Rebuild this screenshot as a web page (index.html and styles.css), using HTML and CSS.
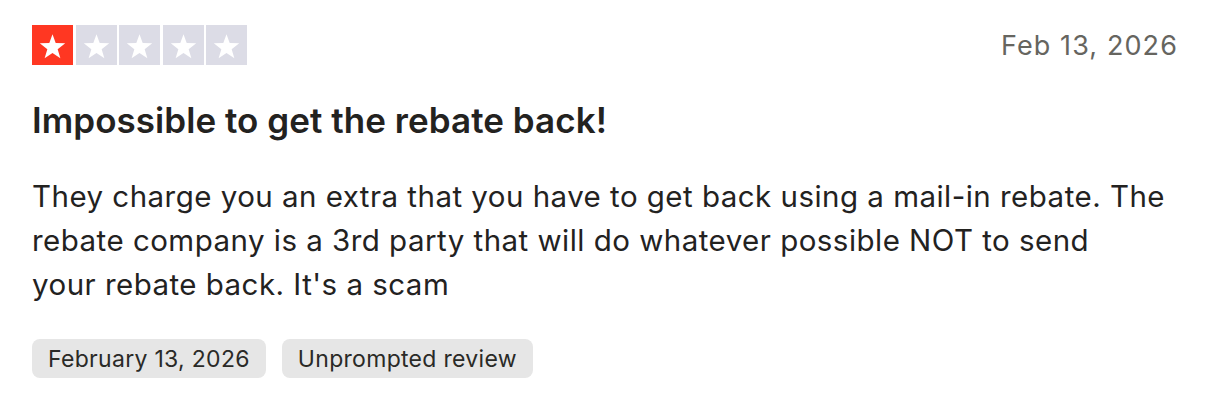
FILE: index.html
```html
<!DOCTYPE html>
<html lang="en">
<head>
<meta charset="utf-8">
<title>Review</title>
<link rel="stylesheet" href="styles.css">
</head>
<body>
<article class="review">
  <header class="review-head">
    <div class="stars" aria-label="Rated 1 out of 5 stars">
      <span class="star star-on"><svg viewBox="0 0 24 24"><path d="M12 3.2l2.47 6.93 7.37.2-5.84 4.5 2.1 7.07L12 17.74l-6.1 4.16 2.1-7.07-5.84-4.5 7.37-.2z"/></svg></span>
      <span class="star"><svg viewBox="0 0 24 24"><path d="M12 3.2l2.47 6.93 7.37.2-5.84 4.5 2.1 7.07L12 17.74l-6.1 4.16 2.1-7.07-5.84-4.5 7.37-.2z"/></svg></span>
      <span class="star"><svg viewBox="0 0 24 24"><path d="M12 3.2l2.47 6.93 7.37.2-5.84 4.5 2.1 7.07L12 17.74l-6.1 4.16 2.1-7.07-5.84-4.5 7.37-.2z"/></svg></span>
      <span class="star"><svg viewBox="0 0 24 24"><path d="M12 3.2l2.47 6.93 7.37.2-5.84 4.5 2.1 7.07L12 17.74l-6.1 4.16 2.1-7.07-5.84-4.5 7.37-.2z"/></svg></span>
      <span class="star"><svg viewBox="0 0 24 24"><path d="M12 3.2l2.47 6.93 7.37.2-5.84 4.5 2.1 7.07L12 17.74l-6.1 4.16 2.1-7.07-5.84-4.5 7.37-.2z"/></svg></span>
    </div>
    <time class="date">Feb 13, 2026</time>
  </header>
  <h2 class="title">Impossible to get the rebate back!</h2>
  <p class="text">They charge you an extra that you have to get back using a mail-in rebate. The rebate company is a 3rd party that will do whatever possible NOT to send<br>your rebate back. It's a scam</p>
  <div class="tags">
    <span class="tag">February 13, 2026</span>
    <span class="tag">Unprompted review</span>
  </div>
</article>
</body>
</html>
```

FILE: styles.css
```css
html, body {
  margin: 0;
  padding: 0;
  background: #ffffff;
}

body {
  font-family: Inter, "Noto Sans", "Liberation Sans", sans-serif;
  color: #23221f;
}

.review {
  padding: 25px 44px 0 32px;
}

.review-head {
  display: flex;
  justify-content: space-between;
  align-items: center;
}

.stars {
  display: flex;
  gap: 2.5px;
}

.star {
  width: 41px;
  height: 40px;
  background: #dcdce6;
  display: flex;
  align-items: center;
  justify-content: center;
}

.star-on {
  background: #ff3722;
}

.star svg {
  width: 31px;
  height: 31px;
  fill: #ffffff;
}

.date {
  font-size: 27px;
  color: #66655f;
  letter-spacing: 1.1px;
}

.title {
  margin: 34px 0 0;
  font-size: 35px;
  font-weight: 600;
  line-height: 42px;
  letter-spacing: 0.05px;
}

.text {
  margin: 33px 0 0;
  font-size: 29.5px;
  line-height: 44px;
  letter-spacing: 0.47px;
}

.tags {
  display: flex;
  gap: 16px;
  margin-top: 33px;
}

.tag {
  background: #e6e6e6;
  border-radius: 8px;
  padding: 0 16px;
  height: 39px;
  display: flex;
  align-items: center;
  font-size: 23px;
  letter-spacing: 0.3px;
  color: #2a2a27;
}
```
